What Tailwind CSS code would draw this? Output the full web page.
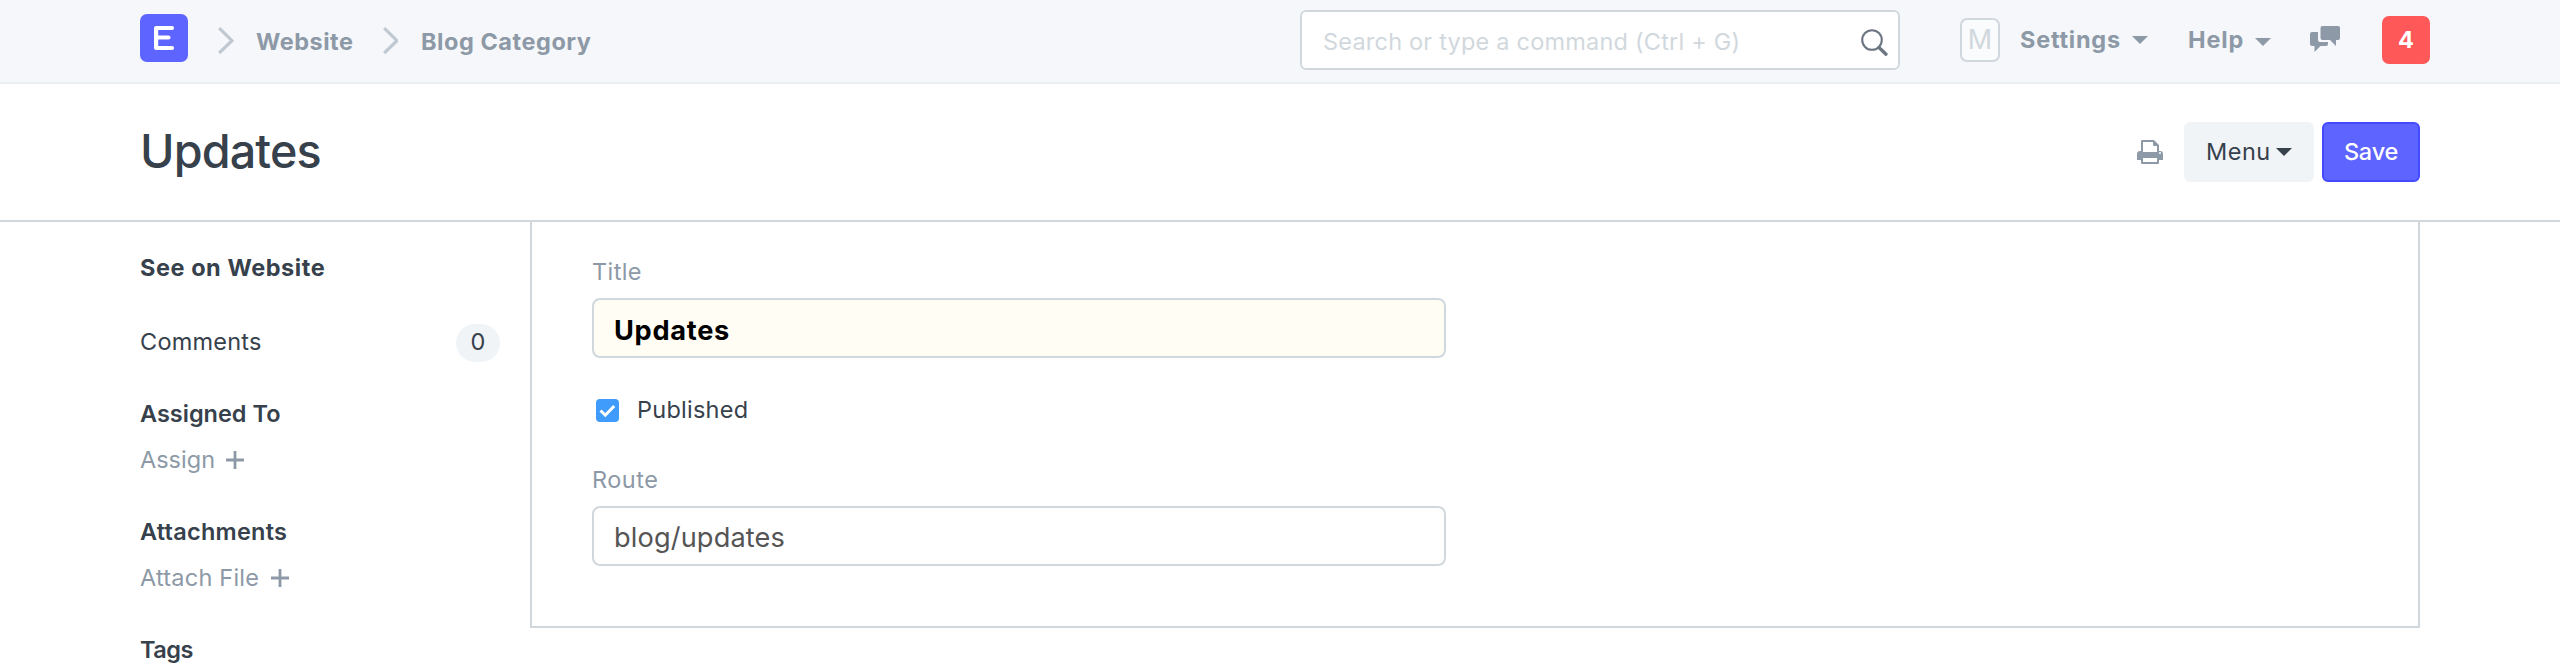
<!DOCTYPE html>
<html lang="en">
<head>
<meta charset="utf-8">
<title>Updates</title>
<script src="https://cdn.jsdelivr.net/npm/@tailwindcss/browser@4"></script>
</head>
<body class="h-[664px] overflow-hidden bg-white font-['Inter',sans-serif] text-[23.5px] leading-[28px] text-[#36414c] whitespace-nowrap">
<header class="flex h-[84px] items-start border-b-2 border-[#ebeef0] bg-[#f5f7fa] pl-[140px] font-bold text-[#8d99a6]">
  <a class="mt-[14px] block size-12 rounded-[7px] bg-[#5e64ff]">
    <svg class="size-12" viewBox="0 0 48 48" fill="none" stroke="#fff" stroke-width="4.2" stroke-linecap="round" stroke-linejoin="round"><path d="M32 14H16.100V34H32M16 23.500H28.500"/></svg>
  </a>
  <svg class="mt-[27px] ml-[30px] h-[28px] w-[16px]" viewBox="0 0 16 28" fill="none" stroke="#c0c9d2" stroke-width="3.2"><path d="M1.200 1.200L14 13.700L1.200 26"/></svg>
  <a class="mt-[28px] ml-[22px] w-[127px] tracking-[0.5px]">Website</a>
  <svg class="mt-[27px] -ml-px h-[28px] w-[16px]" viewBox="0 0 16 28" fill="none" stroke="#c0c9d2" stroke-width="3.2"><path d="M2.200 1.200L15 13.700L2.200 26"/></svg>
  <a class="mt-[28px] ml-[23px] w-[879px] tracking-[0.54px]">Blog Category</a>
  <div class="mt-[10px] flex h-[60px] w-[600px] items-start justify-between rounded-[6px] border-2 border-[#d1d8dd] bg-white pl-[21px] pr-[10px] font-normal">
    <span class="mt-4 tracking-[0.21px] text-[#d1d8dd]">Search or type a command (Ctrl + G)</span>
    <svg class="mt-[16px] h-[28px] w-[27px]" viewBox="0 0 27 28" fill="none" stroke="#6c7680"><circle cx="11" cy="12" r="9.800" stroke-width="2.100"/><path d="M18 19.500L25 26.200" stroke-width="3.300" stroke-linecap="round"/></svg>
  </div>
  <div class="mt-[18px] ml-[60px] flex h-[44px] w-[40px] items-center justify-center rounded-[7px] border-2 border-[#d1d8dd] bg-[#fafbfc] text-[27px] font-normal text-[#d1d8dd]">M</div>
  <span class="mt-[26px] ml-[20px] w-[112px] tracking-[0.76px]">Settings</span>
  <svg class="mt-[36px] h-2 w-4" viewBox="0 0 16 8" fill="#8d99a6"><path d="M0 0H16L8 8Z"/></svg>
  <span class="mt-[26px] ml-[40px] w-[67px] tracking-[0.85px]">Help</span>
  <svg class="mt-[38px] h-2 w-4" viewBox="0 0 16 8" fill="#8d99a6"><path d="M0 0H16L8 8Z"/></svg>
  <svg class="mt-[26px] ml-[39px] h-[28px] w-[31px]" viewBox="0 0 31 28" fill="#8d99a6"><path d="M12.500 0H28Q30 0 30 2V12Q30 14 28 14H26V20L20 14H12.500Q10.500 14 10.500 12V2Q10.500 0 12.500 0Z"/><path d="M2 6H8V14Q8 16 10 16H18V18Q18 20 16 20H10.500L4.500 26V20H2Q0 20 0 18V8Q0 6 2 6Z"/></svg>
  <div class="mt-[16px] ml-[41px] flex h-12 w-12 items-start justify-center rounded-[7px] bg-[#ff5858] pt-[10px] text-white">4</div>
</header>

<section class="flex h-[138px] items-start border-b-2 border-[#d1d8dd] pl-[140px]">
  <h1 class="mt-[37px] w-[1997px] text-[46.7px] leading-[60px] font-medium tracking-[-0.87px]">Updates</h1>
  <svg class="mt-[56px] size-[26px]" viewBox="0 0 26 26" fill="#8d99a6"><path fill-rule="evenodd" d="M4 11V1Q4 0 5 0H17L22 5V11H23Q26 11 26 14V20H22V23Q22 24 21 24H5Q4 24 4 23V20H0V14Q0 11 3 11ZM6 2V12H20V6H17Q16 6 16 5V2ZM6 18V22H20V18ZM23 12A1 1 0 1 0 23 14A1 1 0 1 0 23 12Z"/></svg>
  <button class="mt-[38px] ml-[21px] flex h-[60px] w-[130px] items-start rounded-[6px] bg-[#f0f4f7] pt-[16px] pl-[22px]"><span class="w-[70px] text-left tracking-[0.5px]">Menu</span><svg class="mt-[10px] h-2 w-4" viewBox="0 0 16 8" fill="#36414c"><path d="M0 0H16L8 8Z"/></svg></button>
  <button class="mt-[38px] ml-2 h-[60px] w-[98px] rounded-[6px] border-2 border-[#444bff] bg-[#5e64ff] font-medium tracking-[-0.2px] text-white">Save</button>
</section>

<main class="flex items-start pl-[140px]">
  <aside class="flex w-[390px] flex-col pt-[32px]">
    <a class="font-bold tracking-[0.55px]">See on Website</a>
    <div class="mt-[42px] flex h-[38px] w-[360px] items-start justify-between"><span class="mt-[4px] tracking-[0.22px]">Comments</span><span class="flex h-[38px] w-[44px] justify-center rounded-[19px] bg-[#f0f4f7] pt-[4px]">0</span></div>
    <h4 class="mt-[38px] font-semibold">Assigned To</h4>
    <a class="mt-[18px] flex text-[#8d99a6]"><span class="w-[86px]">Assign</span><svg class="mt-[5px] size-[18px]" viewBox="0 0 18 18" stroke="#8d99a6" stroke-width="2.800"><path d="M0 9H18M9 0V18"/></svg></a>
    <h4 class="mt-[44px] font-semibold tracking-[0.25px]">Attachments</h4>
    <a class="mt-[18px] flex text-[#8d99a6]"><span class="w-[131px] tracking-[0.22px]">Attach File</span><svg class="mt-[5px] size-[18px]" viewBox="0 0 18 18" stroke="#8d99a6" stroke-width="2.800"><path d="M0 9H18M9 0V18"/></svg></a>
    <h4 class="mt-[44px] font-semibold tracking-[-0.5px]">Tags</h4>
  </aside>
  <form class="flex h-[406px] w-[1890px] flex-col border-x-2 border-b-2 border-[#d1d8dd] pt-[36px] pl-[60px]">
    <label class="tracking-[0.4px] text-[#8d99a6]">Title</label>
    <div class="mt-[12px] h-[60px] w-[854px] rounded-[8px] border-2 border-[#d1d8dd] bg-[#fffdf4] pt-[14px] pl-[20px] text-[27.2px] leading-[34px] font-bold tracking-[0.7px] text-black">Updates</div>
    <div class="mt-[38px] flex items-start">
      <svg class="mt-[3px] ml-[4px] size-[23px]" viewBox="0 0 23 23"><rect width="23" height="23" rx="4" fill="#3f9bfc"/><path d="M4.500 11.500L9.300 16.200L18.200 7" fill="none" stroke="#fff" stroke-width="3"/></svg>
      <span class="ml-[18px] tracking-[0.25px]">Published</span>
    </div>
    <label class="mt-[42px] tracking-[0.5px] text-[#8d99a6]">Route</label>
    <div class="mt-[12px] h-[60px] w-[854px] rounded-[8px] border-2 border-[#d1d8dd] bg-white pt-[13px] pl-[20px] text-[27.2px] leading-[34px] tracking-[0.13px] text-[#555]">blog/updates</div>
  </form>
</main>
</body>
</html>
